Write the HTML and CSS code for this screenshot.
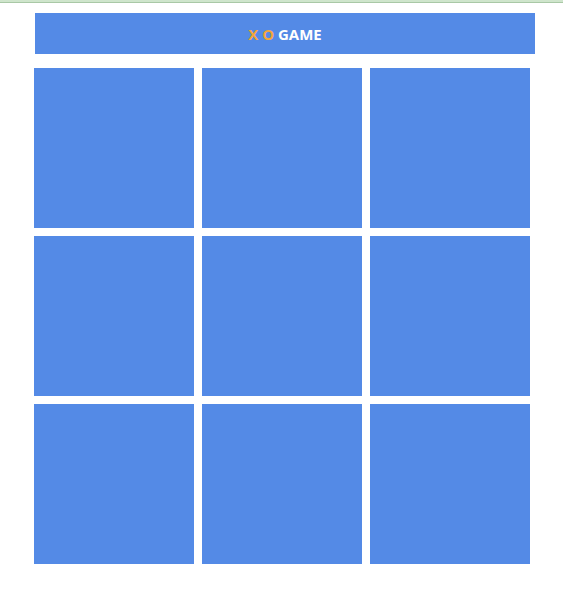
FILE: index.html
```html
<!DOCTYPE html>
<html>
<head>
<meta charset="utf-8">
<link rel="stylesheet" href="styles.css">
</head>
<body>
<div class="topline"></div>
<main class="game">
  <header class="title"><span class="title-text"><span class="mark">X</span> <span class="mark">O</span> GAME</span></header>
  <div class="board">
    <div class="cell"></div><div class="cell"></div><div class="cell"></div>
    <div class="cell"></div><div class="cell"></div><div class="cell"></div>
    <div class="cell"></div><div class="cell"></div><div class="cell"></div>
  </div>
</main>
</body>
</html>
```
FILE: styles.css
```css
html, body { margin: 0; padding: 0; background: #fff; }
.topline {
  height: 2px;
  background: #cfe5cc;
  border-bottom: 1px solid #a9c8a6;
}
.game {
  padding: 10px 0 0 34px;
  font-family: "Open Sans", "Noto Sans", sans-serif;
}
.title {
  margin-left: 1px;
  width: 500px;
  height: 41px;
  background: #548ae6;
  color: #fff;
  font-weight: 700;
  font-size: 15px;
  display: flex;
  align-items: center;
  justify-content: center;
}
.title-text { white-space: pre; }
.mark { color: #f3a63a; }
.board {
  margin-top: 14px;
  display: grid;
  grid-template-columns: repeat(3, 160px);
  grid-auto-rows: 160px;
  gap: 8px;
}
.cell { background: #548ae6; }
```
